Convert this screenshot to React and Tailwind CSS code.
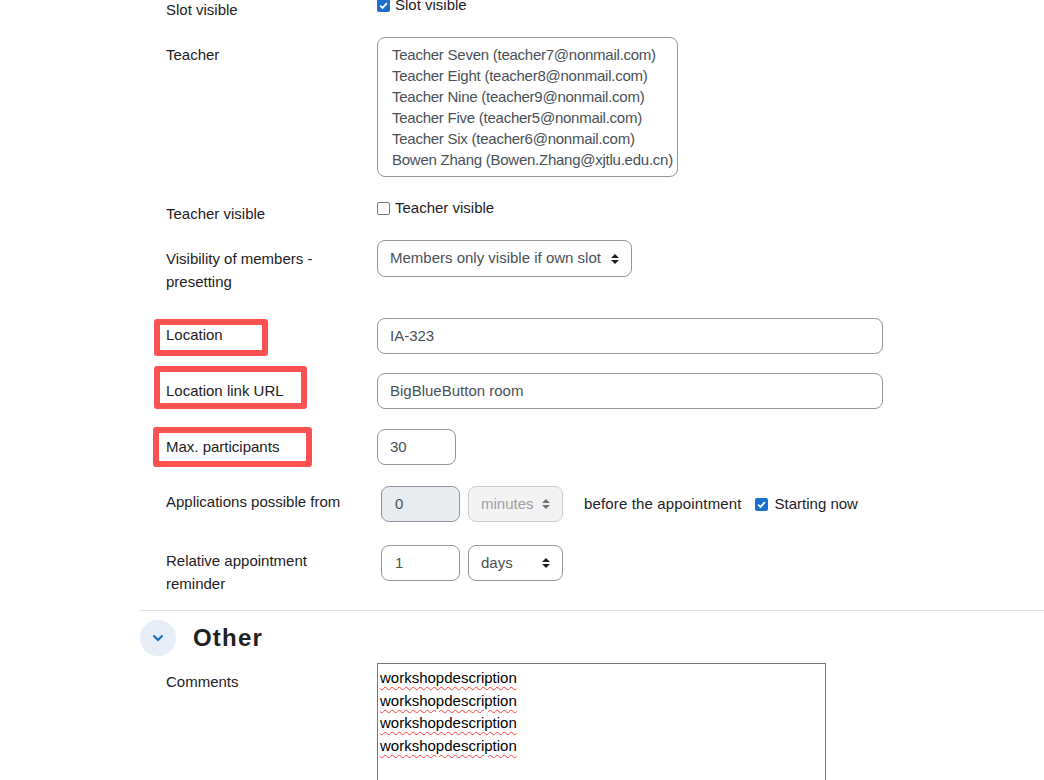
import React from "react";

function Arrows({ color = "#1d2125" }) {
  return (
    <svg width="10" height="12" viewBox="0 0 10 12" className="shrink-0">
      <polygon points="1,5 5,1 9,5" fill={color} />
      <polygon points="1,7 5,11 9,7" fill={color} />
    </svg>
  );
}

function Check({ checked }) {
  if (checked) {
    return (
      <span className="inline-flex w-[13px] h-[13px] rounded-[2px] bg-[#1a6fce] items-center justify-center shrink-0">
        <svg width="11" height="11" viewBox="0 0 11 11">
          <path d="M2.2 5.6 L4.5 7.9 L8.9 3.2" stroke="#fff" strokeWidth="1.8" fill="none" />
        </svg>
      </span>
    );
  }
  return <span className="inline-block w-[13px] h-[13px] rounded-[2px] border border-[#767676] bg-white shrink-0" />;
}

function Label({ children, pt }) {
  return (
    <div className={"w-[211px] shrink-0 text-[15px] leading-[22.5px] text-[#1d2125] " + pt}>{children}</div>
  );
}

export default function App() {
  const teachers = [
    "Teacher Seven (teacher7@nonmail.com)",
    "Teacher Eight (teacher8@nonmail.com)",
    "Teacher Nine (teacher9@nonmail.com)",
    "Teacher Five (teacher5@nonmail.com)",
    "Teacher Six (teacher6@nonmail.com)",
    "Bowen Zhang (Bowen.Zhang@xjtlu.edu.cn)",
  ];
  return (
    <div className="w-[1044px] h-[780px] overflow-hidden bg-white font-['Liberation_Sans',Arial,sans-serif] text-[#1d2125]">
      <div className="ml-[140px] mt-[-6px]">
        <div className="pl-[26px]">
          {/* Slot visible */}
          <div className="flex h-[43px]">
            <Label pt="pt-[5px]">Slot visible</Label>
            <div className="flex items-center gap-[5px] h-[22.5px] text-[15px]">
              <Check checked />
              <span>Slot visible</span>
            </div>
          </div>
          {/* Teacher */}
          <div className="flex h-[159px]">
            <Label pt="pt-[7px]">Teacher</Label>
            <div className="w-[301px] h-[140px] border border-[#8f959e] rounded-lg pl-[14px] pt-[6px] overflow-hidden text-[15px] leading-[21px] text-[#495057] whitespace-nowrap tracking-[-0.25px]">
              {teachers.map((t) => (
                <div key={t}>{t}</div>
              ))}
            </div>
          </div>
          {/* Teacher visible */}
          <div className="flex h-[44px]">
            <Label pt="pt-[7px]">Teacher visible</Label>
            <div className="flex items-center gap-[5px] h-[22.5px] mt-[1px] text-[15px]">
              <Check />
              <span>Teacher visible</span>
            </div>
          </div>
          {/* Visibility */}
          <div className="flex h-[78px]">
            <Label pt="pt-[8px]">
              Visibility of members -<br />presetting
            </Label>
            <div className="w-[255px] h-[37px] border border-[#8f959e] rounded-lg pl-[12px] pr-[11px] flex items-center justify-between text-[15px] text-[#495057]">
              <span>Members only visible if own slot</span>
              <Arrows />
            </div>
          </div>
          {/* Location */}
          <div className="relative flex h-[55px]">
            <span className="absolute left-[-12px] top-[1px] w-[114px] h-[37px] border-[6px] border-[#fa5252] rounded-[3px]" />
            <Label pt="pt-[6px]">Location</Label>
            <div className="w-[506px] h-[36px] border border-[#8f959e] rounded-lg px-3 flex items-center text-[15px] text-[#495057]">
              IA-323
            </div>
          </div>
          {/* Location link URL */}
          <div className="relative flex h-[56px]">
            <span className="absolute left-[-12px] top-[-7px] w-[153px] h-[43px] border-[6px] border-[#fa5252] rounded-[3px]" />
            <Label pt="pt-[7px]">Location link URL</Label>
            <div className="w-[506px] h-[36px] border border-[#8f959e] rounded-lg px-3 flex items-center text-[15px] text-[#495057]">
              BigBlueButton room
            </div>
          </div>
          {/* Max participants */}
          <div className="relative flex h-[57px]">
            <span className="absolute left-[-13px] top-[-2px] w-[159px] h-[40px] border-[6px] border-[#fa5252] rounded-[3px]" />
            <Label pt="pt-[7px]">Max. participants</Label>
            <div className="w-[79px] h-[36px] border border-[#8f959e] rounded-lg px-3 flex items-center text-[15px] text-[#495057]">
              30
            </div>
          </div>
          {/* Applications possible from */}
          <div className="flex h-[59px]">
            <Label pt="pt-[5px]">Applications possible from</Label>
            <div className="flex items-center h-[36px] pl-[4px] text-[15px]">
              <div className="w-[79px] h-[36px] border border-[#8f959e] rounded-lg bg-[#e9ecef] px-[13px] flex items-center text-[#495057]">
                0
              </div>
              <div className="ml-[8px] w-[95px] h-[36px] border border-[#c9ccd0] rounded-lg bg-[#f3f3f3] pl-[12px] pr-[11px] flex items-center justify-between text-[#9aa0a6]">
                <span>minutes</span>
                <Arrows color="#6f757b" />
              </div>
              <span className="ml-[21px] text-[#1d2125] tracking-[0.15px]">before the appointment</span>
              <span className="ml-[13px] flex items-center gap-[7px]">
                <Check checked />
                <span className="text-[#1d2125]">Starting now</span>
              </span>
            </div>
          </div>
          {/* Relative appointment reminder */}
          <div className="flex h-[65px]">
            <Label pt="pt-[5px]">
              Relative appointment<br />reminder
            </Label>
            <div className="flex items-start pl-[4px] text-[15px]">
              <div className="w-[79px] h-[36px] border border-[#8f959e] rounded-lg px-[13px] flex items-center text-[#495057]">
                1
              </div>
              <div className="ml-[8px] w-[95px] h-[36px] border border-[#8f959e] rounded-lg pl-[12px] pr-[11px] flex items-center justify-between text-[#495057]">
                <span>days</span>
                <Arrows />
              </div>
            </div>
          </div>
        </div>
        <div className="h-px bg-[#dee2e6]" />
        {/* Other heading */}
        <div className="mt-[9px] flex items-center h-[36px]">
          <div className="w-[36px] h-[36px] rounded-full bg-[#e7eef8] flex items-center justify-center">
            <svg width="12" height="8" viewBox="0 0 12 8">
              <path d="M1.5 1.5 L6 6 L10.5 1.5" stroke="#0f6cbf" strokeWidth="2" fill="none" />
            </svg>
          </div>
          <h3 className="ml-[17px] text-[24px] font-bold tracking-[1.2px] text-[#1d2125] leading-none">Other</h3>
        </div>
        <div className="pl-[26px] mt-[7px] flex">
          <Label pt="pt-[8px]">Comments</Label>
          <div className="w-[449px] h-[140px] border border-[#767676] pl-[2px] pt-[3px] text-[15px] leading-[22.5px] text-black">
            {[0, 1, 2, 3].map((i) => (
              <div key={i}>
                <span className="underline decoration-wavy decoration-[#ff3b3b] decoration-1 underline-offset-[3px]">
                  workshopdescription
                </span>
              </div>
            ))}
          </div>
        </div>
      </div>
    </div>
  );
}
